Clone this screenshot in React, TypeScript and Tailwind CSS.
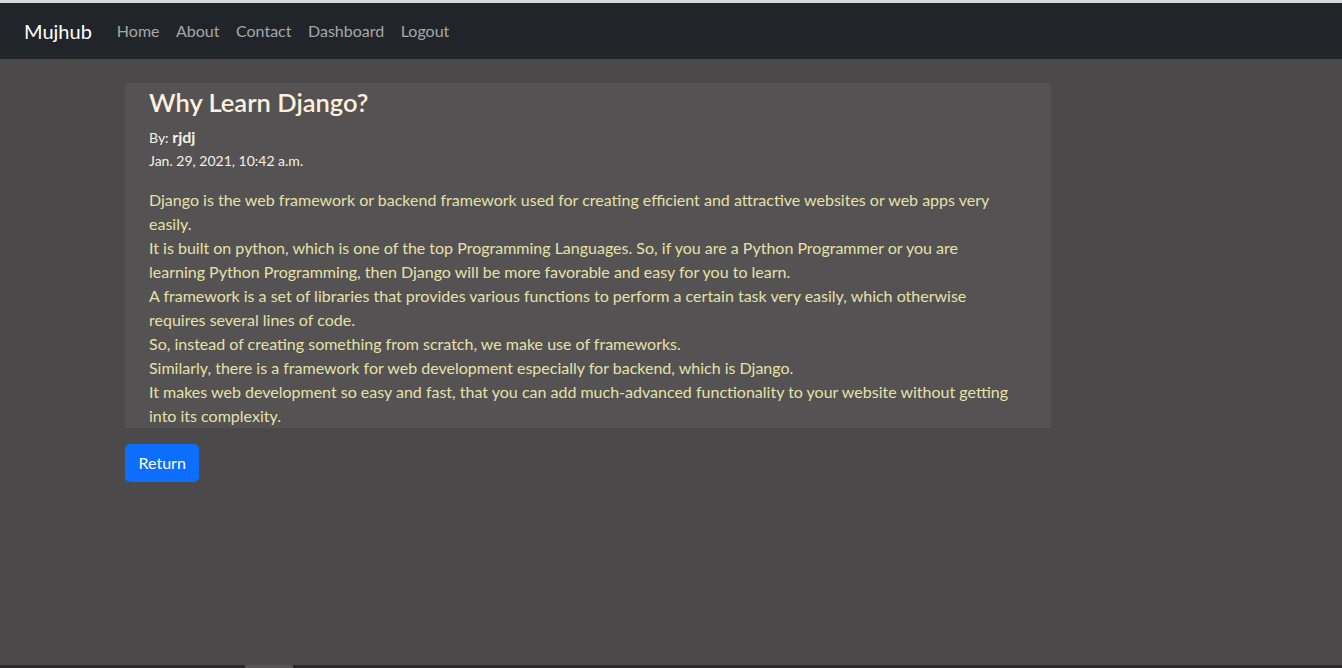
const paragraphs = [
  "Django is the web framework or backend framework used for creating efficient and attractive websites or web apps very easily.",
  "It is built on python, which is one of the top Programming Languages. So, if you are a Python Programmer or you are learning Python Programming, then Django will be more favorable and easy for you to learn.",
  "A framework is a set of libraries that provides various functions to perform a certain task very easily, which otherwise requires several lines of code.",
  "So, instead of creating something from scratch, we make use of frameworks.",
  "Similarly, there is a framework for web development especially for backend, which is Django.",
  "It makes web development so easy and fast, that you can add much-advanced functionality to your website without getting into its complexity.",
];

const links = ["Home", "About", "Contact", "Dashboard", "Logout"];

export default function App() {
  return (
    <div
      className="min-h-screen flex flex-col bg-[#4b494a]"
      style={{ fontFamily: "Lato, 'Open Sans', sans-serif" }}
    >
      {/* screenshot edge */}
      <div className="h-[3px] bg-[#d9d9d9]" />

      {/* Navbar */}
      <nav className="h-[56px] bg-[#212529] flex items-center px-6">
        <span className="text-white text-[20px] mr-[25px]">Mujhub</span>
        <ul className="flex gap-[16.5px]">
          {links.map((l) => (
            <li key={l} className="text-[16px] text-[#a6a7a9]">
              {l}
            </li>
          ))}
        </ul>
      </nav>

      {/* Post */}
      <main className="flex-1 pl-[125px] pt-6">
        <article className="w-[926px] bg-[#545253] pl-6 pr-[37px] pt-[2px]">
          <h3 className="text-[25.5px] leading-[34px] font-semibold text-[#fdf1de]">
            Why Learn Django?
          </h3>
          <p className="mt-[6px] text-[14px] leading-[24px] text-[#f7f0e6]">
            By: <b className="text-[16px] font-bold">rjdj</b>
          </p>
          <p className="text-[14px] leading-[21px] text-[#f7f0e6]">
            Jan. 29, 2021, 10:42 a.m.
          </p>
          <div className="mt-[17px] text-[16px] leading-[24px] text-[#e6e1a8]">
            {paragraphs.map((p, i) => (
              <p key={i}>{p}</p>
            ))}
          </div>
        </article>

        <button className="mt-4 h-[38px] px-[13.5px] rounded-[5px] bg-[#0d6efd] text-white text-[16px]">
          Return
        </button>
      </main>

      {/* screenshot bottom edge */}
      <div className="h-[3px] bg-[#2a2a2a] flex">
        <div className="ml-[245px] w-[48px] bg-[#555]" />
      </div>
    </div>
  );
}
